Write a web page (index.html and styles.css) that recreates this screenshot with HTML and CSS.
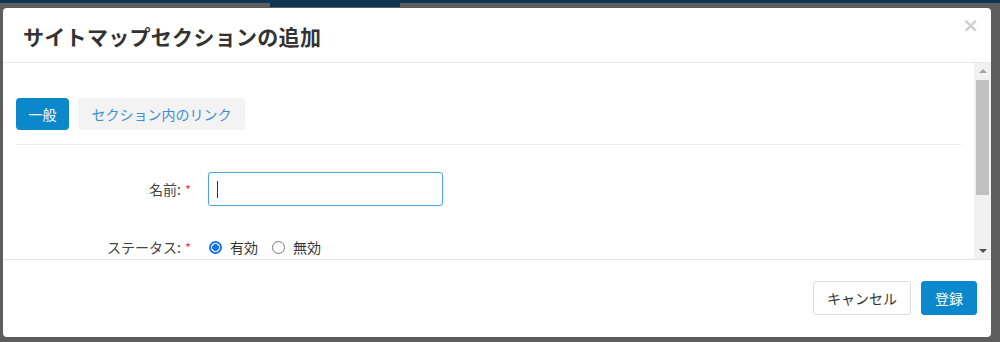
FILE: index.html
```html
<!DOCTYPE html>
<html lang="ja">
<head>
<meta charset="utf-8">
<link rel="stylesheet" href="styles.css">
</head>
<body>
<div class="backdrop">
  <div class="topbar"><div class="topbar-seg"></div></div>
  <div class="modal">
    <div class="modal-header">
      <h4 class="modal-title">サイトマップセクションの追加</h4>
      <span class="close">×</span>
    </div>
    <div class="modal-body">
      <div class="body-content">
        <div class="tabs">
          <span class="tab active">一般</span>
          <span class="tab">セクション内のリンク</span>
        </div>
        <div class="tab-line"></div>
        <div class="form-row">
          <label class="form-label">名前:<span class="req">*</span></label>
          <div class="input"><span class="caret"></span></div>
        </div>
        <div class="form-row status-row">
          <label class="form-label">ステータス:<span class="req">*</span></label>
          <div class="radios">
            <span class="radio checked"></span><span class="radio-text">有効</span>
            <span class="radio"></span><span class="radio-text">無効</span>
          </div>
        </div>
      </div>
      <div class="scrollbar">
        <span class="arrow up"></span>
        <div class="track"><div class="thumb"></div></div>
        <span class="arrow down"></span>
      </div>
    </div>
    <div class="modal-footer">
      <button class="btn btn-default">キャンセル</button>
      <button class="btn btn-primary">登録</button>
    </div>
  </div>
</div>
</body>
</html>
```
FILE: styles.css
```css
* { box-sizing: border-box; }
html, body {
  margin: 0;
  padding: 0;
  width: 1000px;
  height: 342px;
  overflow: hidden;
  background: #5d5d5d;
  font-family: "Noto Sans CJK JP", "Noto Sans", sans-serif;
  color: #333;
}
.backdrop {
  display: flex;
  flex-direction: column;
}
.topbar {
  height: 8px;
  border-top: 3px solid #0f3552;
}
.topbar-seg {
  margin-left: 270px;
  width: 130px;
  height: 4px;
  background: #0f3552;
}
.modal {
  margin-left: 3px;
  width: 988px;
  height: 329px;
  background: #fff;
  border-radius: 4px;
  display: flex;
  flex-direction: column;
  overflow: hidden;
}
.modal-header {
  height: 55px;
  border-bottom: 1px solid #e8e8e8;
  display: flex;
  align-items: center;
  justify-content: space-between;
  padding: 0 12px 0 20px;
}
.modal-title {
  margin: 0;
  font-size: 21px;
  font-weight: bold;
  color: #333;
  line-height: 1;
  padding-top: 2px;
  letter-spacing: 0.3px;
}
.close {
  font-size: 20px;
  font-weight: bold;
  color: #cfcfcf;
  line-height: 1;
  align-self: flex-start;
  margin-top: 7px;
  font-family: "DejaVu Sans", sans-serif;
}
.modal-body {
  height: 197px;
  display: flex;
  border-bottom: 1px solid #e5e5e5;
}
.body-content {
  flex: 1;
  overflow: hidden;
  padding: 35px 13px 0 13px;
}
.tabs {
  display: flex;
  gap: 9px;
}
.tab {
  height: 32px;
  line-height: 32px;
  padding: 0 13.5px;
  border-radius: 4px;
  background: #f3f3f3;
  color: #3d8fd4;
  font-size: 14px;
}
.tab.active {
  background: #0b88cb;
  color: #fff;
  padding: 0 12.5px;
}
.tab-line {
  margin-top: 14px;
  height: 1px;
  background: #e2ecf5;
}
.form-row {
  display: flex;
  align-items: center;
  margin-top: 27px;
  height: 34px;
}
.status-row {
  margin-top: 24px;
}
.form-label {
  width: 175px;
  text-align: right;
  font-size: 14px;
  color: #444;
  margin-right: 17px;
}
.req {
  color: #e8404a;
  margin-left: 4px;
  font-size: 13px;
}
.input {
  width: 235px;
  height: 34px;
  border: 1px solid #4ea6e0;
  border-radius: 3px;
  display: flex;
  align-items: center;
  padding-left: 8px;
  box-shadow: 0 0 1px rgba(78, 166, 224, 0.4);
}
.caret {
  width: 1px;
  height: 17px;
  background: #333;
}
.radios {
  display: flex;
  align-items: center;
  font-size: 14px;
  color: #333;
}
.radio {
  width: 13px;
  height: 13px;
  border-radius: 50%;
  border: 1px solid #767676;
  margin-left: 1px;
  margin-right: 8px;
  background: #fff;
}
.radio.checked {
  border: 2px solid #1a73e8;
  background: radial-gradient(circle, #1a73e8 0 3.2px, #fff 3.6px);
}
.radio-text {
  margin-right: 13px;
}
.scrollbar {
  width: 17px;
  background: #f1f1f1;
  display: flex;
  flex-direction: column;
  align-items: center;
}
.arrow {
  width: 0;
  height: 0;
  border-left: 4px solid transparent;
  border-right: 4px solid transparent;
  margin: 6px 0;
}
.arrow.up {
  border-bottom: 4px solid #a3a3a3;
}
.arrow.down {
  border-top: 4px solid #505050;
}
.track {
  flex: 1;
  width: 100%;
  padding: 1px 2px 0;
}
.thumb {
  height: 115px;
  background: #c1c1c1;
}
.modal-footer {
  flex: 1;
  display: flex;
  justify-content: flex-end;
  align-items: flex-start;
  padding: 21px 14px 0 0;
  gap: 10px;
}
.btn {
  height: 34px;
  font-family: "Noto Sans CJK JP", "Noto Sans", sans-serif;
  font-size: 14px;
  border-radius: 3px;
  padding: 0 13px;
  line-height: 32px;
  white-space: nowrap;
}
.btn-default {
  background: #fff;
  border: 1px solid #dcdcdc;
  color: #333;
}
.btn-primary {
  background: #0b88cb;
  border: 1px solid #0b88cb;
  color: #fff;
}
```
